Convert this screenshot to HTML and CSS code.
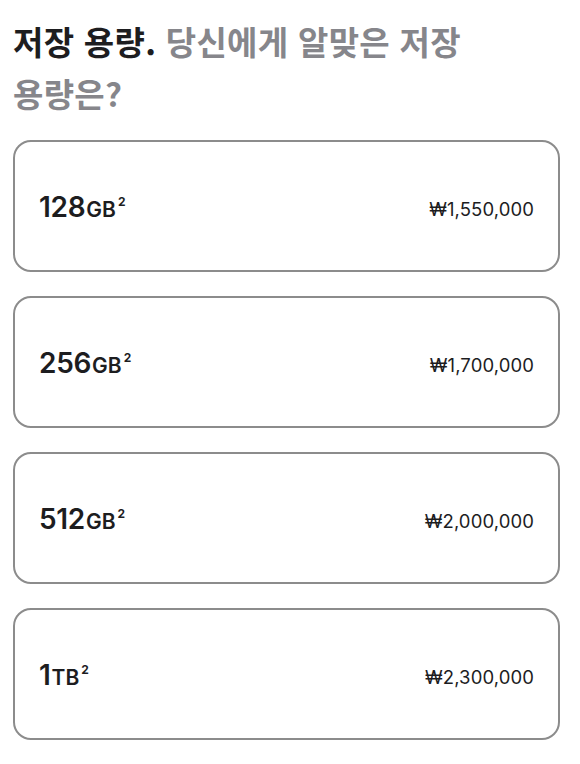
FILE: index.html
```html
<!DOCTYPE html>
<html lang="ko">
<head>
<meta charset="utf-8">
<link rel="stylesheet" href="styles.css">
</head>
<body>
<div class="page">
  <h2 class="title"><span class="strong">저장 용량.</span> <span class="muted">당신에게 알맞은 저장 용량은?</span></h2>
  <div class="list">
    <div class="card"><span class="cap"><span class="num">128</span><span class="unit">GB</span><sup class="fn">2</sup></span><span class="price">₩1,550,000</span></div>
    <div class="card"><span class="cap"><span class="num">256</span><span class="unit">GB</span><sup class="fn">2</sup></span><span class="price">₩1,700,000</span></div>
    <div class="card"><span class="cap"><span class="num">512</span><span class="unit">GB</span><sup class="fn">2</sup></span><span class="price">₩2,000,000</span></div>
    <div class="card"><span class="cap"><span class="num">1</span><span class="unit">TB</span><sup class="fn">2</sup></span><span class="price">₩2,300,000</span></div>
  </div>
</div>
</body>
</html>
```
FILE: styles.css
```css
html, body { margin: 0; padding: 0; background: #fff; }
body { font-family: Inter, "Noto Sans CJK KR", sans-serif; color: #1d1d1f; }
.page { padding: 15px 20px 0 13px; width: 547px; }
.title { margin: 0; font-family: "Noto Sans CJK KR", sans-serif; font-size: 33px; line-height: 52px; font-weight: 700; letter-spacing: 0.3px; width: 470px; }
.strong { color: #1d1d1f; }
.muted { color: #86868b; }
.list { display: flex; flex-direction: column; gap: 24px; margin-top: 21px; }
.card { height: 128px; border: 2px solid #8c8c8c; border-radius: 18px; display: flex; align-items: center; justify-content: space-between; padding: 0 24px 0 24px; }
.cap { display: block; margin-top: 2px; white-space: nowrap; }
.num { font-size: 28px; font-weight: 600; letter-spacing: -0.3px; }
.unit { font-size: 21px; font-weight: 600; margin-left: 1px; }
.fn { font-size: 12px; font-weight: 700; margin-left: 2px; vertical-align: 11px; line-height: 1; }
.price { font-size: 18.5px; font-weight: 400; color: #1d1d1f; margin-top: 5px; letter-spacing: 0.1px; }
```
